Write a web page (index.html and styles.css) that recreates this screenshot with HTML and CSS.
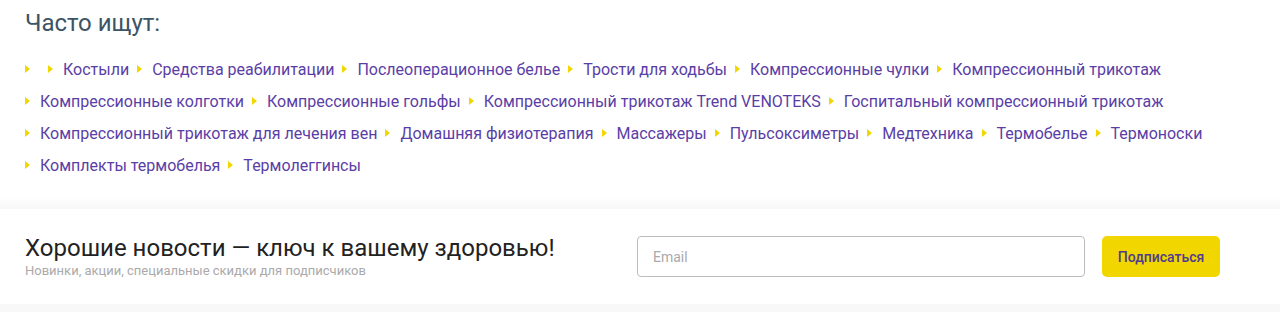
FILE: index.html
```html
<!DOCTYPE html>
<html lang="ru">
<head>
<meta charset="utf-8">
<title>Часто ищут</title>
<link rel="stylesheet" href="styles.css">
</head>
<body>
<section class="popular">
  <h2 class="popular__title">Часто ищут:</h2>
  <ul class="tags">
    <li class="tag"><a href="#"></a></li>
    <li class="tag"><a href="#">Костыли</a></li>
    <li class="tag"><a href="#">Средства реабилитации</a></li>
    <li class="tag"><a href="#">Послеоперационное белье</a></li>
    <li class="tag"><a href="#">Трости для ходьбы</a></li>
    <li class="tag"><a href="#">Компрессионные чулки</a></li>
    <li class="tag"><a href="#">Компрессионный трикотаж</a></li>
    <li class="tag"><a href="#">Компрессионные колготки</a></li>
    <li class="tag"><a href="#">Компрессионные гольфы</a></li>
    <li class="tag"><a href="#">Компрессионный трикотаж Trend VENOTEKS</a></li>
    <li class="tag"><a href="#">Госпитальный компрессионный трикотаж</a></li>
    <li class="tag"><a href="#">Компрессионный трикотаж для лечения вен</a></li>
    <li class="tag"><a href="#">Домашняя физиотерапия</a></li>
    <li class="tag"><a href="#">Массажеры</a></li>
    <li class="tag"><a href="#">Пульсоксиметры</a></li>
    <li class="tag"><a href="#">Медтехника</a></li>
    <li class="tag"><a href="#">Термобелье</a></li>
    <li class="tag"><a href="#">Термоноски</a></li>
    <li class="tag"><a href="#">Комплекты термобелья</a></li>
    <li class="tag"><a href="#">Термолеггинсы</a></li>
  </ul>
</section>
<section class="subscribe-wrap">
  <div class="subscribe">
    <div class="subscribe__text">
      <h3 class="subscribe__title">Хорошие новости — ключ к вашему здоровью!</h3>
      <p class="subscribe__note">Новинки, акции, специальные скидки для подписчиков</p>
    </div>
    <form class="subscribe__form">
      <input class="subscribe__input" type="email" placeholder="Email">
      <button class="subscribe__btn" type="button">Подписаться</button>
    </form>
  </div>
</section>
</body>
</html>
```
FILE: styles.css
```css
* { box-sizing: border-box; }
html, body {
  margin: 0;
  padding: 0;
  background: #fff;
  font-family: Roboto, "Liberation Sans", Arial, sans-serif;
}
.popular {
  padding: 7px 25px 15px 25px;
}
.popular__title {
  margin: 0;
  font-size: 24px;
  line-height: 32px;
  font-weight: 400;
  color: #3c5465;
}
.tags {
  list-style: none;
  margin: 14px 0 0 0;
  padding: 0;
  display: flex;
  flex-wrap: wrap;
  width: 1230px;
}
.tag {
  position: relative;
  padding-left: 15px;
  margin-right: 8px;
  height: 32px;
  display: flex;
  align-items: center;
  min-width: 15px;
}
.tag::before {
  content: "";
  position: absolute;
  left: 0;
  top: 12px;
  width: 0;
  height: 0;
  border-top: 4.5px solid transparent;
  border-bottom: 4.5px solid transparent;
  border-left: 5px solid #f2d600;
}
.tag a {
  font-size: 16px;
  color: #5a3ea6;
  text-decoration: none;
  white-space: nowrap;
}
.subscribe-wrap {
  background: linear-gradient(#fff 0, #f8f8f8 12px, #f8f8f8 100%);
  padding: 13px 0 9px 0;
}
.subscribe {
  background: #fff;
  height: 95px;
  padding: 0 60px 0 25px;
  display: flex;
  align-items: center;
  justify-content: space-between;
}
.subscribe__title {
  margin: 0;
  font-size: 24px;
  line-height: 28px;
  font-weight: 400;
  color: #222;
}
.subscribe__note {
  margin: 1px 0 0 0;
  font-size: 13px;
  line-height: 16px;
  color: #aaa;
}
.subscribe__form {
  display: flex;
  gap: 17px;
}
.subscribe__input {
  width: 448px;
  height: 41px;
  border: 1px solid #bdbdbd;
  border-radius: 4px;
  padding: 0 15px;
  font-family: inherit;
  font-size: 14px;
  color: #333;
}
.subscribe__input::placeholder { color: #aaa; }
.subscribe__btn {
  width: 118px;
  height: 41px;
  border: 0;
  border-radius: 5px;
  background: #f2d600;
  color: #4f3b91;
  font-family: inherit;
  font-size: 14px;
  font-weight: 500;
}
```
